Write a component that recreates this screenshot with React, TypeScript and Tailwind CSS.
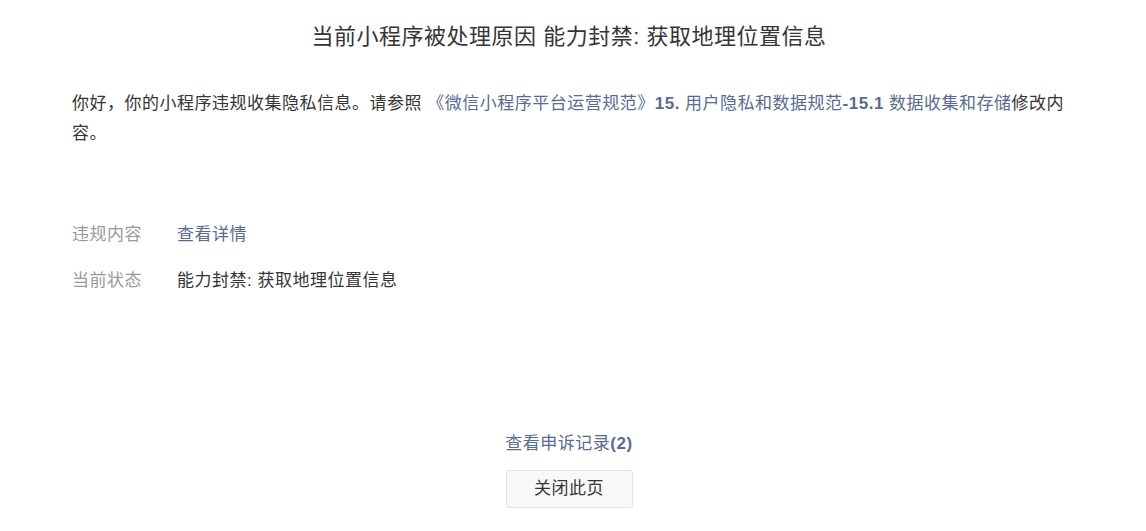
const font = "font-['Liberation_Sans','Noto_Sans_CJK_SC',sans-serif]";

const infoRows = [
  { label: "违规内容", value: "查看详情", link: true },
  { label: "当前状态", value: "能力封禁: 获取地理位置信息", link: false },
];

export default function App() {
  return (
    <div className={`${font} min-h-[531px] bg-white pl-[72px] pr-[80px] text-[#353535]`}>
      <h1 className="pt-[22px] text-center text-[22px] font-normal leading-[30px] tracking-[0.5px]">
        当前小程序被处理原因 能力封禁: 获取地理位置信息
      </h1>

      <p className="mt-[37px] text-[17px] leading-[30px] tracking-[0.5px]">
        你好，你的小程序违规收集隐私信息。请参照{" "}
        <a className="text-[#576b95]">
          《微信小程序平台运营规范》<b>15.</b> 用户隐私和数据规范<b>-15.1</b> 数据收集和存储
        </a>
        修改内容。
      </p>

      <div className="mt-[71px] flex flex-col gap-[16px] text-[17px] leading-[30px] tracking-[0.5px]">
        {infoRows.map((row) => (
          <div key={row.label} className="flex">
            <span className="w-[105px] shrink-0 text-[#9a9a9a]">{row.label}</span>
            <span className={row.link ? "text-[#576b95]" : ""}>{row.value}</span>
          </div>
        ))}
      </div>

      <div className="mt-[133px] flex flex-col items-center">
        <a className="text-[17px] leading-[30px] tracking-[0.5px] text-[#576b95]">
          查看申诉记录<b>(2)</b>
        </a>
        <button className="mt-[11px] h-[38px] w-[127px] rounded-[3px] border border-[#e3e3e3] bg-[#f8f8f8] text-[17px] tracking-[0.5px] text-[#353535]">
          关闭此页
        </button>
      </div>
    </div>
  );
}
